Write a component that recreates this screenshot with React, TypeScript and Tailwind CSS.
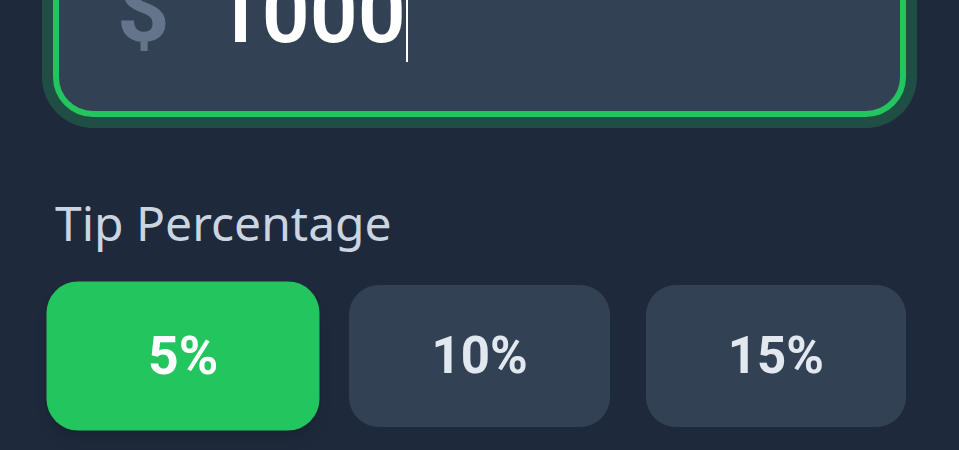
import { useState } from "react";

const tips = [5, 10, 15];

export default function App() {
  const [tip, setTip] = useState(5);

  return (
    <div className="min-h-screen w-full overflow-hidden bg-[#1e293b] px-[53px]">
      {/* Bill amount */}
      <div className="-mt-[70px] flex h-[187px] items-end rounded-[40px] border-[6px] border-[#22c55e] bg-[#334155] pb-[55px] pl-[58px] ring-[11px] ring-[#22c55e]/25">
        <span className="font-['Roboto',sans-serif] text-[92px] font-bold leading-none text-[#64748b]">
          $
        </span>
        <span className="ml-[44px] font-['Roboto',sans-serif] text-[84px] font-semibold leading-none text-white">
          1000
        </span>
        <span className="-mb-[6px] h-[100px] w-[2px] bg-white" />
      </div>

      <p className="mt-[82px] pl-[2px] font-['Noto_Sans',sans-serif] text-[48px] leading-none text-[#cbd5e1]">
        Tip Percentage
      </p>

      <div className="mt-[38px] grid grid-cols-3 gap-[36px]">
        {tips.map((t) => {
          const active = t === tip;
          return (
            <button
              key={t}
              onClick={() => setTip(t)}
              className={
                active
                  ? "flex h-[142px] scale-105 items-center justify-center rounded-[30px] bg-[#22c55e] font-['Roboto',sans-serif] text-[51px] font-bold text-white shadow-lg"
                  : "flex h-[142px] items-center justify-center rounded-[30px] bg-[#334155] font-['Roboto',sans-serif] text-[51px] font-bold text-[#e2e8f0]"
              }
            >
              {t}%
            </button>
          );
        })}
      </div>
    </div>
  );
}
